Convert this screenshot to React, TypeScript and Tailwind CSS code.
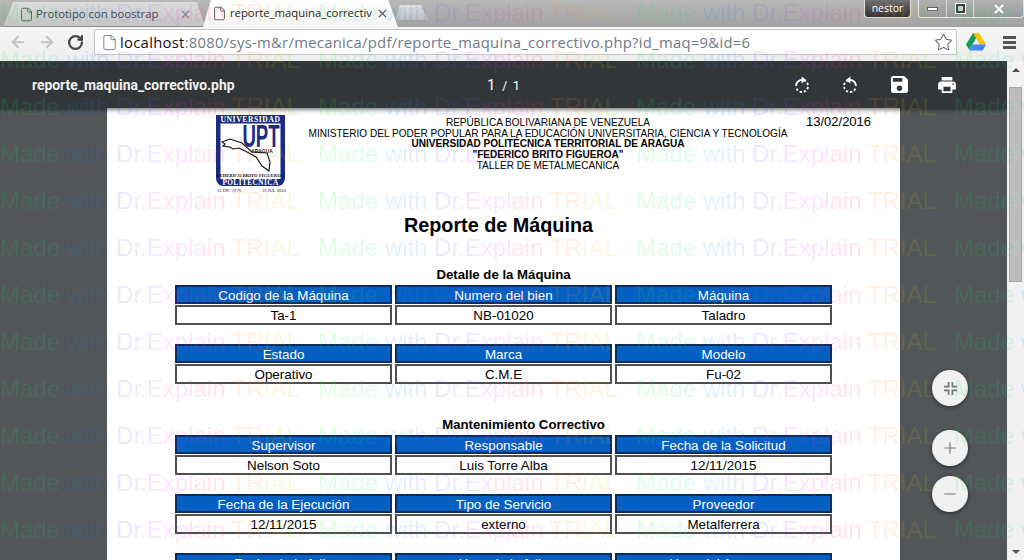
import React from 'react'
import { ArrowLeft, ArrowRight, File, Minus, Plus, RotateCw, Star, X } from 'lucide-react'

const rows = [
    {
        title: 'Detalle de la Máquina',
        titleClass: '',
        groups: [
            [['Codigo de la Máquina', 'Ta-1'], ['Numero del bien', 'NB-01020'], ['Máquina', 'Taladro']],
            [['Estado', 'Operativo'], ['Marca', 'C.M.E'], ['Modelo', 'Fu-02']],
        ],
    },
    {
        title: 'Mantenimiento Correctivo',
        titleClass: 'pl-[40px]',
        groups: [
            [['Supervisor', 'Nelson Soto'], ['Responsable', 'Luis Torre Alba'], ['Fecha de la Solicitud', '12/11/2015']],
            [['Fecha de la Ejecución', '12/11/2015'], ['Tipo de Servicio', 'externo'], ['Proveedor', 'Metalferrera']],
            [['Fecha de la falla', ''], ['Hora de la falla', ''], ['Hora del Arranque', '']],
        ],
    },
]

const Watermark = () => (
    <div className="absolute inset-0 overflow-hidden pointer-events-none z-50 font-['Liberation_Sans',sans-serif] text-[24px]">
        <div className="flex flex-col -mt-[11px]">
            {Array.from({ length: 13 }).map((_, r) => (
                <div key={r} className="flex h-[47px] items-center whitespace-nowrap">
                    {Array.from({ length: 4 }).map((_, c) => (
                        <div key={c} className="w-[318px] shrink-0">
                            <span className="text-[#00e84a22]">Ma</span>
                            <span className="text-[#00d8a022]">de </span>
                            <span className="text-[#0090ff22]">wi</span>
                            <span className="text-[#3070ff22]">th </span>
                            <span className="text-[#6a50ff22]">Dr</span>
                            <span className="text-[#a040ff22]">.E</span>
                            <span className="text-[#e030f022]">xp</span>
                            <span className="text-[#ff30a022]">la</span>
                            <span className="text-[#ff305022]">in </span>
                            <span className="text-[#ff802022]">TR</span>
                            <span className="text-[#e8c00022]">IA</span>
                            <span className="text-[#a0d80022]">L</span>
                        </div>
                    ))}
                </div>
            ))}
        </div>
    </div>
)

const TabStrip = () => (
    <div className="h-[27px] flex items-end pl-[3px] bg-gradient-to-b from-[#b8b8b8] to-[#a2a2a2] font-['Open_Sans',sans-serif] text-[11.3px] relative">
        <div className="w-[202px] h-[25px] flex items-center pl-[16px] pr-[13px] bg-gradient-to-b from-[#dcdcdc] to-[#c4c4c4] rounded-t-[5px] border-b border-[#8f8f8f] [clip-path:polygon(0_100%,5%_0,96%_0,100%_100%)] text-[#4a4a4a]">
            <File size={15} strokeWidth={1.4} className="text-[#555] shrink-0" />
            <span className="ml-[2px] whitespace-nowrap">Prototipo con boostrap</span>
            <X size={13} strokeWidth={2.4} className="ml-auto text-[#888]" />
        </div>
        <div className="w-[195px] h-[27px] -ml-[2px] flex items-center pl-[9px] pr-[9px] bg-gradient-to-b from-[#ffffff] to-[#f4f4f4] [clip-path:polygon(0_100%,4%_0,95%_0,100%_100%)] text-[#222]">
            <File size={15} strokeWidth={1.4} className="text-[#555] shrink-0" />
            <span className="ml-[3px] w-[142px] overflow-hidden whitespace-nowrap">reporte_maquina_correctivo.php</span>
            <X size={13} strokeWidth={2.6} className="ml-auto text-[#666]" />
        </div>
        <div className="w-[32px] h-[15px] mb-[7px] -ml-[2px] bg-gradient-to-b from-[#e2e2e2] to-[#bcbcbc] rounded-t-[3px] [clip-path:polygon(0_100%,12%_0,78%_0,100%_100%)]" />
        <div className="absolute top-0 right-0 flex items-start h-[19px]">
            <div className="w-[47px] h-[18px] flex items-center justify-center bg-gradient-to-b from-[#707070] to-[#333] rounded-b-[4px] border border-t-0 border-[#ddd] text-white text-[10.5px] mr-[7px]">
                nestor
            </div>
            <div className="flex w-[106px] h-[18px] border border-t-0 border-[#e4e4e4] rounded-b-[4px] bg-gradient-to-b from-[#b2b2b2] to-[#9a9a9a]">
                <div className="w-[28px] flex items-center justify-center border-r border-[#d8d8d8]">
                    <div className="w-[11px] h-[4px] bg-white border border-[#666]" />
                </div>
                <div className="w-[27px] flex items-center justify-center border-r border-[#d8d8d8]">
                    <div className="w-[9px] h-[9px] bg-[#cfcfcf] border-2 border-[#3d3d3d] outline outline-1 outline-white" />
                </div>
                <div className="flex-1 flex items-center justify-center">
                    <X size={14} strokeWidth={3.5} className="text-white" />
                </div>
            </div>
        </div>
    </div>
)

const Drive = () => (
    <svg width="20" height="18" viewBox="0 0 20 18">
        <path d="M7 0h6L6.5 11.5 3.4 17 0 11.5z" fill="#109d58" />
        <path d="M7 0h6l7 11.5h-6.4z" fill="#f4c20d" />
        <path d="M3.4 17.5l3.2-6H20l-3.3 6z" fill="#4285f4" />
    </svg>
)

const AddressBar = () => (
    <div className="h-[34px] pb-[4px] flex items-center bg-gradient-to-b from-[#f6f6f6] to-[#ededed] font-['Open_Sans',sans-serif]">
        <div className="w-[94px] flex items-center pl-[9px] shrink-0">
            <ArrowLeft size={18} strokeWidth={3} className="text-[#c8c8c8]" />
            <ArrowRight size={18} strokeWidth={3} className="text-[#c8c8c8] ml-[11px]" />
            <RotateCw size={17} strokeWidth={3.2} className="text-[#444] ml-[11px]" />
        </div>
        <div className="w-[863px] h-[26px] bg-white border border-[#c4c4c4] rounded-[2px] flex items-center pl-[6px] pr-[3px] text-[14.8px]">
            <File size={17} strokeWidth={1.3} className="text-[#777] shrink-0" />
            <span className="ml-[2px] whitespace-nowrap tracking-[0.02em] text-[#6f7a88]">
                <span className="text-[#111]">localhost</span>:8080/sys-m&amp;r/mecanica/pdf/reporte_maquina_correctivo.php?id_maq=9&amp;id=6
            </span>
            <Star size={19} strokeWidth={1.3} className="ml-auto text-[#666]" />
        </div>
        <div className="ml-[9px]">
            <Drive />
        </div>
        <div className="ml-[17px] flex flex-col gap-[2px]">
            <div className="w-[13px] h-[3px] bg-[#555]" />
            <div className="w-[13px] h-[3px] bg-[#555]" />
            <div className="w-[13px] h-[3px] bg-[#555]" />
        </div>
    </div>
)

const Rotate = ({ flip }: { flip?: boolean }) => (
    <svg width="16" height="18" viewBox="0 0 16 18" className={flip ? '-scale-x-100' : ''}>
        <path d="M8 4a6 6 0 0 0-6 6" fill="none" stroke="#fff" strokeWidth="1.8" />
        <path d="M2.6 12.6A6 6 0 1 0 8 4" fill="none" stroke="#fff" strokeWidth="1.8" strokeDasharray="2.4 1.8" />
        <path d="M7.6 0.6l4.6 3.4-4.6 3.4z" fill="#fff" />
    </svg>
)

const PdfToolbar = () => (
    <div className="h-[47px] shrink-0 bg-[#323639] flex items-center text-white font-['Roboto',sans-serif] shadow-[0_2px_4px_rgba(0,0,0,0.5)] relative z-10">
        <div className="w-[455px] pl-[32px] pt-[2px] text-[13.9px] font-bold text-[#f1f1f1] whitespace-nowrap">reporte_maquina_correctivo.php</div>
        <div className="text-[15px] w-[36px] pl-[32px] pt-[1px] whitespace-nowrap">
            1 <span className="text-[12px] ml-[3px]">/</span> <span className="text-[13px] ml-[2px]">1</span>
        </div>
        <div className="ml-[303px] flex items-center">
            <Rotate />
            <div className="ml-[32px] flex"><Rotate flip /></div>
            <svg width="17" height="17" viewBox="3 3 18 18" className="ml-[33px]" fill="#fff">
                <path d="M17 3H5c-1.11 0-2 .9-2 2v14c0 1.1.89 2 2 2h14c1.1 0 2-.9 2-2V7l-4-4zm-5 16c-1.66 0-3-1.34-3-3s1.34-3 3-3 3 1.34 3 3-1.34 3-3 3zm3-10H5V5h10v4z" />
            </svg>
            <svg width="18" height="16" viewBox="2 3 20 18" className="ml-[30px]" fill="#fff">
                <path d="M19 8H5c-1.66 0-3 1.34-3 3v6h4v4h12v-4h4v-6c0-1.66-1.34-3-3-3zm-3 11H8v-5h8v5zm3-7c-.55 0-1-.45-1-1s.45-1 1-1 1 .45 1 1-.45 1-1 1zm-1-9H6v4h12V3z" />
            </svg>
        </div>
    </div>
)

const Logo = () => (
    <svg width="72" height="78" viewBox="0 0 72 78" className="shrink-0">
        <path d="M1 0h69v62c0 6-3 9-8 9H9c-5 0-8-3-8-9z" fill="#1b2a83" />
        <rect x="5.5" y="8.5" width="60" height="55.5" fill="#fff" />
        <text x="35.5" y="7" textAnchor="middle" fontFamily="Liberation Serif" fontWeight="700" fontSize="7.6" fill="#fff" letterSpacing=".6">UNIVERSIDAD</text>
        <text x="0" y="0" textAnchor="middle" fontFamily="Liberation Sans" fontWeight="700" fontSize="31" fill="#1b2a83" transform="translate(46 32) scale(.6 1)">UPT</text>
        <path d="M7 27l8-3 12 4 10 9 15 1 3 9-1 9-7-5-6-9-9-5-8-4-6 1-3-2-7-1 2-2z" fill="#fff" stroke="#111" strokeWidth="1.1" />
        <text x="47" y="37.5" textAnchor="middle" fontFamily="Liberation Sans" fontWeight="700" fontSize="5" fill="#222">ARAGUA</text>
        <text x="35.5" y="61.5" textAnchor="middle" fontFamily="Liberation Serif" fontWeight="700" fontSize="4.7" fill="#111">FEDERICO BRITO FIGUEROA</text>
        <text x="35.5" y="70" textAnchor="middle" fontFamily="Liberation Serif" fontWeight="700" fontSize="7.2" fill="#fff" letterSpacing=".5">POLITECNICA</text>
        <text x="2" y="77" fontFamily="Liberation Serif" fontSize="4.6" fill="#222">12 DIC 1976</text>
        <text x="47" y="77" fontFamily="Liberation Serif" fontSize="4.6" fill="#222">16 JUL 2010</text>
    </svg>
)

const Section = ({ title, titleClass, groups }: (typeof rows)[number]) => (
    <div className="flex flex-col">
        <h3 className={`text-[13.2px] font-bold text-center leading-[15px] text-black mb-[3px] ${titleClass}`}>{title}</h3>
        <div className="flex flex-col gap-[19px]">
            {groups.map((group, i) => (
                <div key={i} className="grid grid-cols-3 gap-x-[3px] gap-y-[1px]">
                    {group.map(([label]) => (
                        <div key={label} className="h-[19px] bg-[#0560c4] border-2 border-[#0b2c5c] text-white text-[13.4px] leading-[17px] text-center">
                            {label}
                        </div>
                    ))}
                    {group.map(([label, value]) => (
                        <div key={label} className="h-[20px] bg-white border-2 border-[#505050] text-black text-[13.4px] leading-[17px] text-center">
                            {value}
                        </div>
                    ))}
                </div>
            ))}
        </div>
    </div>
)

const Page = () => (
    <div className="w-[793px] ml-[107px] bg-white font-['Liberation_Sans',sans-serif] flex flex-col shrink-0">
        <div className="flex pt-[7px] pl-[108px] text-black">
            <Logo />
            <div className="w-[502px] ml-[10px] pt-[3px] text-center text-[10.06px] leading-[10.7px] whitespace-nowrap">
                <p>REPÚBLICA BOLIVARIANA DE VENEZUELA</p>
                <p>MINISTERIO DEL PODER POPULAR PARA LA EDUCACIÓN UNIVERSITARIA, CIENCIA Y TECNOLOGÍA</p>
                <p className="font-bold">UNIVERSIDAD POLITÉCNICA TERRITORIAL DE ARAGUA</p>
                <p className="font-bold">"FEDERICO BRITO FIGUEROA"</p>
                <p>TALLER DE METALMECANICA</p>
            </div>
            <div className="ml-[7px] text-[13px] leading-[14px] whitespace-nowrap">13/02/2016</div>
        </div>
        <h1 className="text-[19.8px] font-bold text-center pr-[10px] mt-[20px] leading-[24px] text-black">Reporte de Máquina</h1>
        <div className="mx-[68px] mt-[30px] flex flex-col gap-[33px]">
            {rows.map((s) => (
                <Section key={s.title} {...s} />
            ))}
        </div>
    </div>
)

const Fab = ({ children, className }: { children: React.ReactNode; className: string }) => (
    <div className={`absolute right-[39px] w-[36px] h-[36px] rounded-full bg-[#f1f1f1] shadow-[0_1px_4px_rgba(0,0,0,0.5)] flex items-center justify-center text-[#757575] ${className}`}>
        {children}
    </div>
)

const Scrollbar = () => (
    <div className="w-[17px] shrink-0 bg-[#f1f1f1] flex flex-col items-center relative">
        <div className="mt-[7px] w-0 h-0 border-x-[4px] border-x-transparent border-b-[4px] border-b-[#505050]" />
        <div className="mt-[15px] w-[13px] h-[195px] bg-[#bdbdbd] border border-[#a6a6a6]" />
        <div className="mt-auto mb-[6px] w-0 h-0 border-x-[4px] border-x-transparent border-t-[4px] border-t-[#505050]" />
    </div>
)

export default function App() {
    return (
        <div className="relative w-[1024px] h-[560px] overflow-hidden flex flex-col">
            <TabStrip />
            <AddressBar />
            <div className="flex flex-1 min-h-0">
                <div className="relative flex-1 min-w-0 bg-[#525659] flex flex-col overflow-hidden">
                    <PdfToolbar />
                    <Page />
                    <Fab className="top-[309px]">
                        <svg width="13" height="13" viewBox="0 0 14 14" fill="none" stroke="#757575" strokeWidth="1.8">
                            <path d="M5 0v5H0M9 0v5h5M5 14V9H0M9 14V9h5" />
                        </svg>
                    </Fab>
                    <Fab className="top-[369px]"><Plus size={18} strokeWidth={1.6} /></Fab>
                    <Fab className="top-[415px]"><Minus size={18} strokeWidth={1.6} /></Fab>
                </div>
                <Scrollbar />
            </div>
            <Watermark />
        </div>
    )
}
